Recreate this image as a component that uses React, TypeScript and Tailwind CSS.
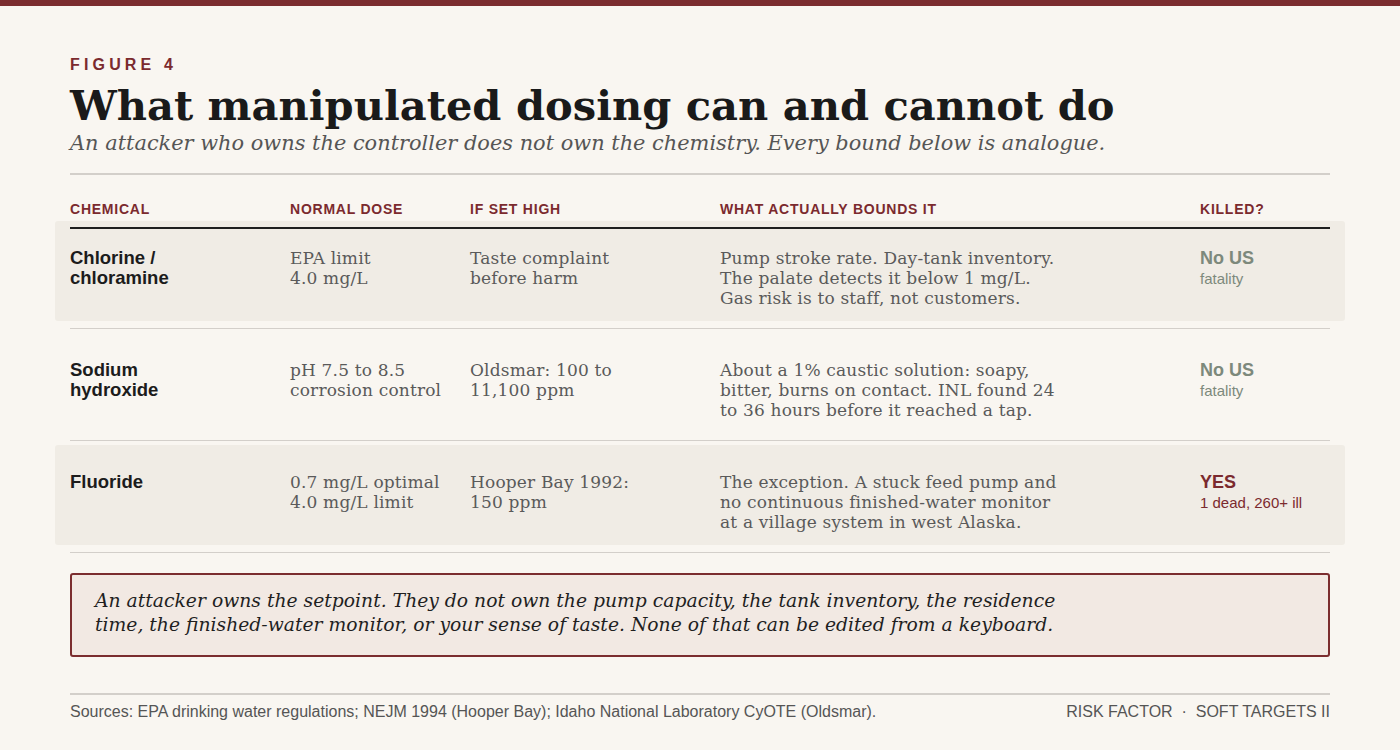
const SANS = "font-['Liberation_Sans',Arial,sans-serif]";
const SERIF = "font-['DejaVu_Serif',Georgia,serif]";

type Row = {
  chemical: string[];
  dose: string[];
  high: string[];
  bound: string[];
  killed: string;
  killedNote: string;
  fatal: boolean;
  shaded: boolean;
};

const ROWS: Row[] = [
  {
    chemical: ['Chlorine /', 'chloramine'],
    dose: ['EPA limit', '4.0 mg/L'],
    high: ['Taste complaint', 'before harm'],
    bound: [
      'Pump stroke rate. Day-tank inventory.',
      'The palate detects it below 1 mg/L.',
      'Gas risk is to staff, not customers.',
    ],
    killed: 'No US',
    killedNote: 'fatality',
    fatal: false,
    shaded: true,
  },
  {
    chemical: ['Sodium', 'hydroxide'],
    dose: ['pH 7.5 to 8.5', 'corrosion control'],
    high: ['Oldsmar: 100 to', '11,100 ppm'],
    bound: [
      'About a 1% caustic solution: soapy,',
      'bitter, burns on contact. INL found 24',
      'to 36 hours before it reached a tap.',
    ],
    killed: 'No US',
    killedNote: 'fatality',
    fatal: false,
    shaded: false,
  },
  {
    chemical: ['Fluoride'],
    dose: ['0.7 mg/L optimal', '4.0 mg/L limit'],
    high: ['Hooper Bay 1992:', '150 ppm'],
    bound: [
      'The exception. A stuck feed pump and',
      'no continuous finished-water monitor',
      'at a village system in west Alaska.',
    ],
    killed: 'YES',
    killedNote: '1 dead, 260+ ill',
    fatal: true,
    shaded: true,
  },
];

const COLS = 'grid grid-cols-[220px_180px_250px_480px_1fr]';

export default function App() {
  return (
    <div className="min-h-screen bg-[#f9f6f1] text-[#1a1a1a]">
      <div className="h-[6px] bg-[#7b2d2f]" />
      <div className="px-[70px]">
        <div className={`${SANS} pt-[50px] text-[16px] leading-[18px] font-bold tracking-[0.26em] text-[#7b2a2e]`}>
          FIGURE 4
        </div>
        <h1 className={`${SERIF} mt-[8px] text-[41.6px] leading-[48px] font-bold text-[#1a1a1a]`}>
          What manipulated dosing can and cannot do
        </h1>
        <p className={`${SERIF} text-[20.9px] leading-[26px] italic text-[#555]`}>
          An attacker who owns the controller does not own the chemistry. Every bound below is analogue.
        </p>
        <div className="mt-[17px] h-[2px] bg-[#d3cfca]" />

        <div className={`${COLS} ${SANS} relative z-10 mt-[26px] pb-[10px] border-b-2 border-[#1f1f1f] text-[14px] leading-[16px] font-bold tracking-[0.055em] text-[#7b2a2e]`}>
          <div>CHEMICAL</div>
          <div>NORMAL DOSE</div>
          <div>IF SET HIGH</div>
          <div>WHAT ACTUALLY BOUNDS IT</div>
          <div>KILLED?</div>
        </div>

        <div className="-mt-[8px]">
          {ROWS.map((r, i) => (
            <div key={i} className={i > 0 ? 'mt-[4px]' : ''}>
              <div className={`${COLS} h-[100px] -mx-[15px] px-[15px] pt-[27px] rounded-[3px] ${r.shaded ? 'bg-[#f0ece5]' : ''}`}>
                <div className={`${SANS} text-[18.5px] leading-[20px] font-bold text-[#1c1c1c]`}>
                  {r.chemical.map((l) => <div key={l}>{l}</div>)}
                </div>
                <Cell lines={r.dose} />
                <Cell lines={r.high} />
                <Cell lines={r.bound} />
                <div className={SANS}>
                  <div className={`text-[18px] leading-[20px] font-bold ${r.fatal ? 'text-[#7b2a2e]' : 'text-[#7d897c]'}`}>{r.killed}</div>
                  <div className={`text-[15px] leading-[22px] ${r.fatal ? 'text-[#7b2a2e]' : 'text-[#7d897c]'}`}>{r.killedNote}</div>
                </div>
              </div>
              <div className="mt-[7px] h-px bg-[#d3cfca]" />
            </div>
          ))}
        </div>

        <div className="mt-[20px] border-2 border-[#7b2d2f] rounded-[3px] bg-[#f2e9e3] px-[23px] pt-[14px] pb-[18px]">
          <p className={`${SERIF} text-[18.75px] leading-[24px] italic text-[#1f1f1f]`}>
            An attacker owns the setpoint. They do not own the pump capacity, the tank inventory, the residence
            <br />
            time, the finished-water monitor, or your sense of taste. None of that can be edited from a keyboard.
          </p>
        </div>

        <div className="mt-[36px] h-[2px] bg-[#d3cfca]" />
        <div className={`${SANS} mt-[8px] flex items-center justify-between text-[16px] leading-[18px] text-[#555]`}>
          <span>Sources: EPA drinking water regulations; NEJM 1994 (Hooper Bay); Idaho National Laboratory CyOTE (Oldsmar).</span>
          <span>RISK FACTOR&nbsp;&nbsp;·&nbsp;&nbsp;SOFT TARGETS II</span>
        </div>
      </div>
    </div>
  );
}

function Cell({ lines }: { lines: string[] }) {
  return (
    <div className={`${SERIF} text-[17px] leading-[20px] tracking-[0.01em] text-[#5a5a5a]`}>
      {lines.map((l) => <div key={l} className="whitespace-nowrap">{l}</div>)}
    </div>
  );
}
